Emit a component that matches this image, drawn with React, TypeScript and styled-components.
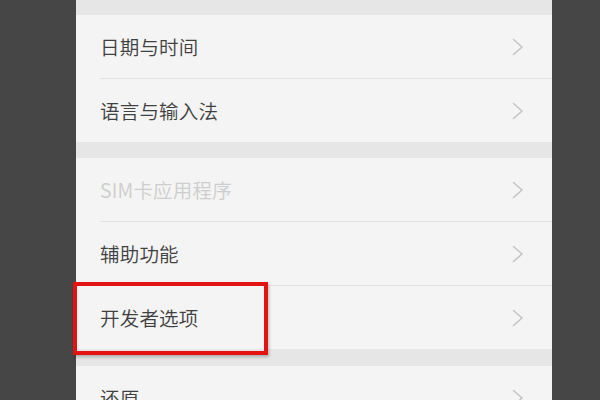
import React from "react";
import styled, { createGlobalStyle } from "styled-components";

const Global = createGlobalStyle`
  html, body { margin: 0; padding: 0; }
  body {
    background: #464646;
    font-family: "Noto Sans CJK SC", "Noto Sans", sans-serif;
    width: 600px;
    height: 400px;
    overflow: hidden;
  }
`;

const Page = styled.div`
  width: 600px;
  height: 400px;
  background: #464646;
  display: flex;
  overflow: hidden;
`;

const Panel = styled.div`
  margin-left: 76px;
  width: 476px;
  background: #f4f4f4;
  display: flex;
  flex-direction: column;
`;

const Gap = styled.div<{ $h: number }>`
  height: ${(p) => p.$h}px;
  flex-shrink: 0;
  background: #e6e6e6;
`;

const Row = styled.div<{ $divider?: boolean }>`
  position: relative;
  flex-shrink: 0;
  height: 63px;
  padding: 0 28px 0 24px;
  display: flex;
  align-items: center;
  justify-content: space-between;
  margin-bottom: ${(p) => (p.$divider ? "1px" : "0")};
  &::after {
    content: "";
    display: ${(p) => (p.$divider ? "block" : "none")};
    position: absolute;
    left: 24px;
    right: 0;
    bottom: -1px;
    height: 1px;
    background: #e2e2e2;
  }
`;

const Label = styled.span<{ $disabled?: boolean }>`
  font-size: 19.5px;
  font-weight: 350;
  color: ${(p) => (p.$disabled ? "#cdcdcd" : "#404040")};
  letter-spacing: 0.2px;
  line-height: 1;
`;

const Highlight = styled.div`
  position: absolute;
  left: -3px;
  top: -4px;
  width: 195px;
  height: 73px;
  box-sizing: border-box;
  border: 4px solid #e31313;
  box-shadow: 1px 2px 3px rgba(0, 0, 0, 0.25);
  pointer-events: none;
`;

const Chevron = () => (
  <svg width="12" height="18" viewBox="0 0 12 18" fill="none">
    <path d="M1.5 1.5 L10 9 L1.5 16.5" stroke="#c4c4c4" strokeWidth="1.6" strokeLinecap="round" strokeLinejoin="round" />
  </svg>
);

type Item = { label: string; disabled?: boolean; highlight?: boolean };

const Group = ({ items }: { items: Item[] }) => (
  <>
    {items.map((it, i) => (
      <Row key={it.label} $divider={i < items.length - 1}>
        <Label $disabled={it.disabled}>{it.label}</Label>
        <Chevron />
        {it.highlight && <Highlight />}
      </Row>
    ))}
  </>
);

export default function App() {
  return (
    <>
      <Global />
      <Page>
        <Panel>
          <Gap $h={15} />
          <Group items={[{ label: "日期与时间" }, { label: "语言与输入法" }]} />
          <Gap $h={16} />
          <Group
            items={[
              { label: "SIM卡应用程序", disabled: true },
              { label: "辅助功能" },
              { label: "开发者选项", highlight: true },
            ]}
          />
          <Gap $h={17} />
          <Group items={[{ label: "还原" }]} />
        </Panel>
      </Page>
    </>
  );
}
